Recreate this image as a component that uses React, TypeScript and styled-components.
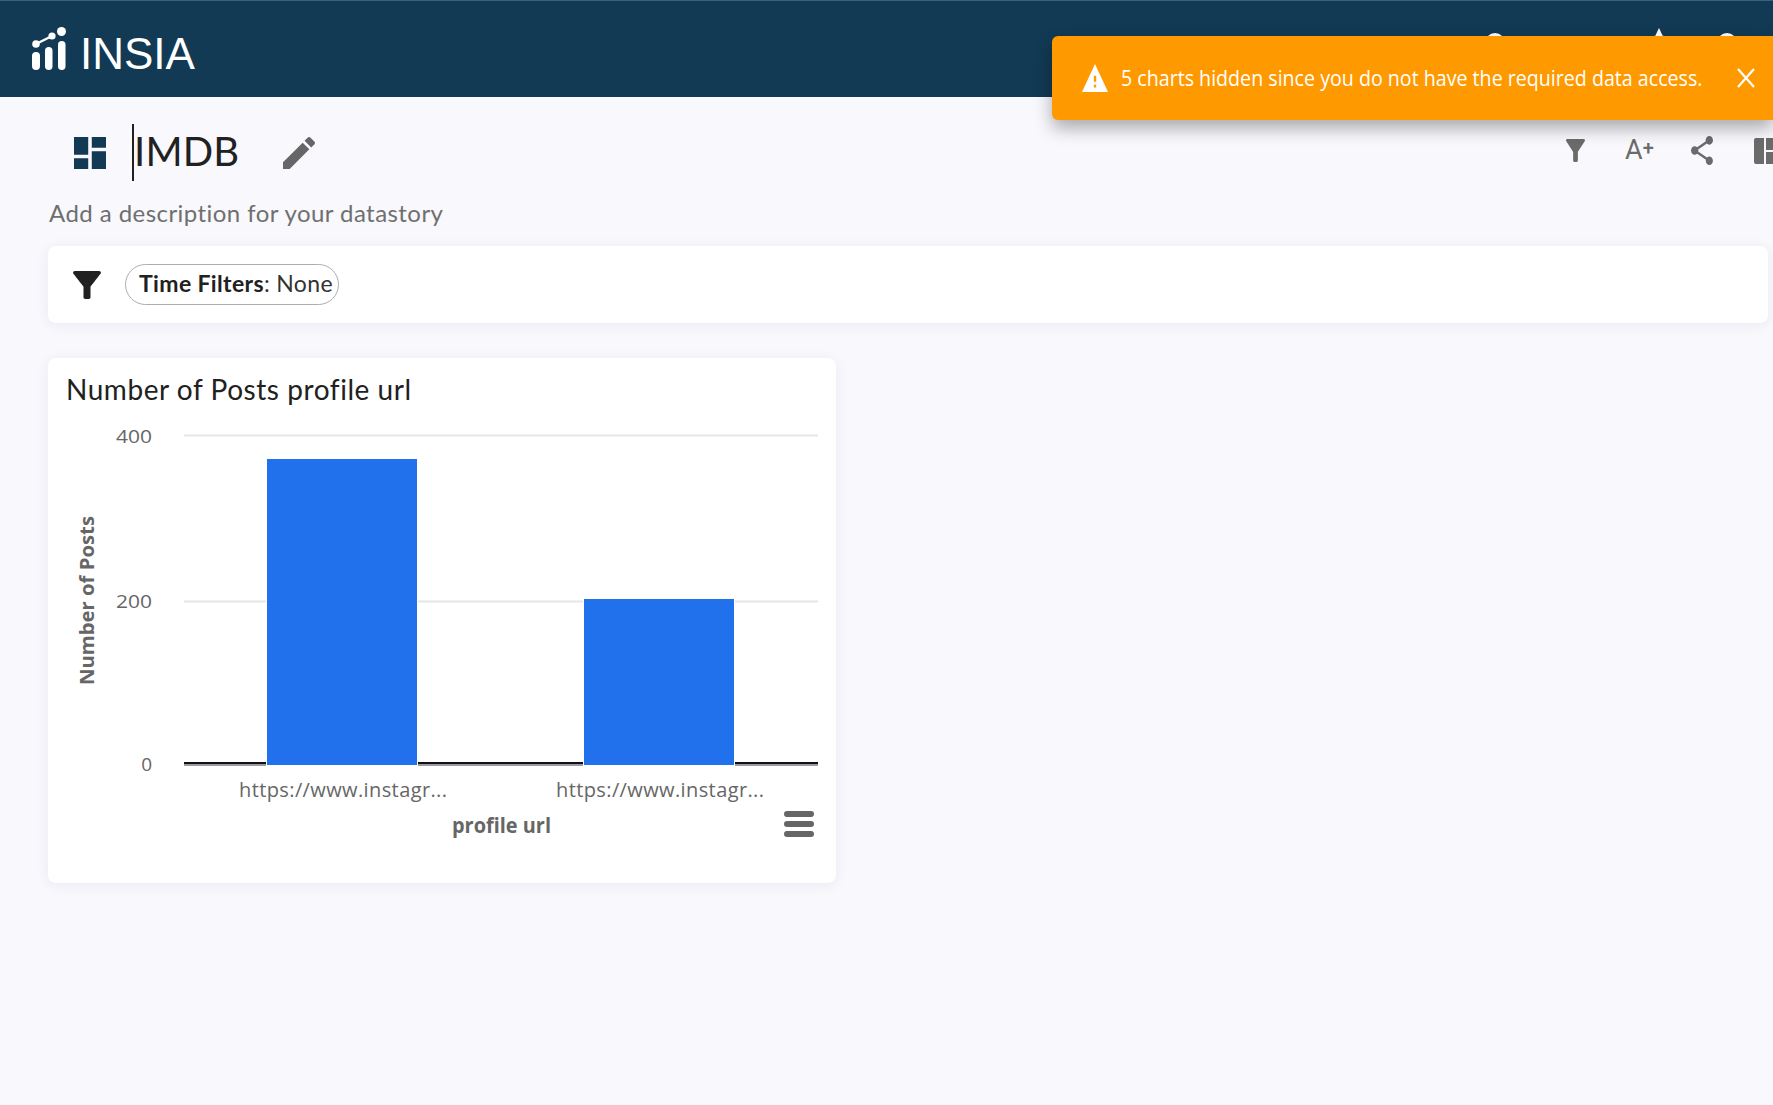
import { createGlobalStyle } from 'styled-components'
import styled from 'styled-components'

const GlobalStyle = createGlobalStyle`
  html, body {
    margin: 0;
    padding: 0;
    background: #f8f8fd;
  }

  #root {
    position: relative;
    width: 1773px;
    height: 1105px;
    overflow: hidden;
  }
`

const Page = styled.div`
  width: 1800px;
  font-family: Lato, "Open Sans", sans-serif;
`

const Header = styled.header`
  box-sizing: border-box;
  width: 1773px;
  height: 97px;
  padding: 0 32px;
  display: flex;
  align-items: center;
  justify-content: space-between;
  gap: 16px;
  border-top: 1px solid #3d5f7e;
  background: #123a54;
`

const Brand = styled.div`
  display: flex;
  align-items: center;
  gap: 14px;
`

const BrandName = styled.span`
  margin-top: 10px;
  color: #fff;
  font-family: "Liberation Sans", Arial, sans-serif;
  font-size: 44px;
  line-height: 1;
`

const HeaderIcons = styled.div`
  display: flex;
  align-items: flex-start;
  height: 60px;
  margin-top: -4px;
  margin-right: 4px;
`

const HeaderDot = styled.span<{ $gap: number }>`
  width: 20px;
  height: 20px;
  margin-left: ${(p) => p.$gap}px;
  margin-top: 16px;
  border-radius: 50%;
  background: #fff;
`

const HeaderStar = styled.svg`
  width: 26px;
  height: 26px;
  margin-left: 141px;
  margin-top: 10px;
`

const TitleRow = styled.div`
  width: 1780px;
  height: 57px;
  margin-top: 27px;
  display: flex;
  align-items: center;
  justify-content: space-between;
`

const TitleLeft = styled.div`
  display: flex;
  align-items: center;
  padding-left: 74px;
`

const DashIcon = styled.svg`
  width: 32px;
  height: 32px;
  margin-right: 26px;
  fill: #123a54;
`

const Title = styled.h1`
  box-sizing: border-box;
  height: 57px;
  margin: 0;
  padding-bottom: 3px;
  display: flex;
  align-items: center;
  border-left: 2px solid #212121;
  color: #212121;
  font-size: 40px;
  font-weight: 400;
  letter-spacing: 0.2px;
  line-height: 1;
`

const EditIcon = styled.svg`
  width: 32px;
  height: 32px;
  margin-left: 44px;
  fill: #666;
`

const Tools = styled.div`
  display: flex;
  align-items: center;
  gap: 40px;
  margin-bottom: 4px;
`

const ToolFunnel = styled.svg`
  width: 19px;
  height: 23px;
  fill: #6b6b6b;
`

const TextSize = styled.span`
  width: 27px;
  color: #6b6b6b;
  font-family: Roboto, sans-serif;
  font-size: 27px;
  line-height: 1;
  white-space: nowrap;
`

const PlusMark = styled.span`
  font-size: 20px;
  font-weight: 500;
  vertical-align: 4px;
`

const ShareIcon = styled.svg`
  width: 22px;
  height: 29px;
  margin-left: -1px;
  fill: #6b6b6b;
`

const LayoutIcon = styled.svg`
  width: 26px;
  height: 26px;
  margin-left: 1px;
  fill: #6b6b6b;
`

const Description = styled.p`
  margin: 16px 0 0 49px;
  color: #6f6f6f;
  font-size: 24px;
  letter-spacing: 0.44px;
  line-height: 32px;
`

const FilterBar = styled.section`
  box-sizing: border-box;
  width: 1720px;
  height: 77px;
  margin: 17px 0 0 48px;
  padding-left: 25px;
  display: flex;
  align-items: center;
  gap: 24px;
  border-radius: 8px;
  background: #fff;
  box-shadow: 0 2px 14px rgba(40, 40, 90, 0.07);
`

const FunnelIcon = styled.svg`
  width: 28px;
  height: 28px;
  fill: #212121;
`

const Chip = styled.div`
  box-sizing: border-box;
  width: 214px;
  height: 41px;
  padding: 0 0 3px 13px;
  display: flex;
  align-items: center;
  border: 1px solid #adadad;
  border-radius: 21px;
  color: #333;
  font-size: 23px;
  letter-spacing: 0.36px;
  white-space: pre;
`

const ChipLabel = styled.strong`
  color: #212121;
  font-weight: 700;
`

const ChartCard = styled.article`
  width: 788px;
  height: 525px;
  margin: 35px 0 0 48px;
  border-radius: 8px;
  background: #fff;
  box-shadow: 0 2px 14px rgba(40, 40, 90, 0.07);
`

const ChartTitle = styled.h2`
  box-sizing: border-box;
  height: 58px;
  margin: 0;
  padding: 13px 0 0 18px;
  color: #212121;
  font-size: 28px;
  font-weight: 400;
  letter-spacing: 0.55px;
  line-height: 36px;
`

const ChartArea = styled.svg`
  display: block;
  width: 788px;
  height: 467px;
`

const Toast = styled.div`
  position: absolute;
  top: 36px;
  right: 0;
  box-sizing: border-box;
  width: 721px;
  height: 84px;
  padding-left: 30px;
  display: flex;
  align-items: center;
  border-radius: 6px 0 0 6px;
  background: #ff9900;
  box-shadow: 0 8px 18px rgba(0, 0, 0, 0.32);
`

const WarnIcon = styled.svg`
  width: 26px;
  height: 28px;
  fill: #fff;
  flex: none;
`

const ToastText = styled.span`
  width: 581px;
  margin: 0 0 2px 13px;
  color: #fff;
  font-family: "Open Sans", sans-serif;
  font-size: 22px;
  line-height: 1;
  white-space: nowrap;
  transform: scaleX(0.892);
  transform-origin: left center;
`

const ToastClose = styled.svg`
  width: 18px;
  height: 20px;
  margin-left: 35px;
  stroke: #fff;
  stroke-width: 2.2;
  flex: none;
`

const axisFont = '"Open Sans", sans-serif'

const bars = [
  { x: 219, top: 43 },
  { x: 536, top: 183 },
]

const Chart = () => (
  <ChartArea viewBox="0 0 788 467">
    {[19.5, 185.5].map((y) => (
      <line key={y} x1={136} x2={770} y1={y} y2={y} stroke="#e6e6e6" strokeWidth={2} />
    ))}
    <line x1={136} x2={770} y1={347} y2={347} stroke="#111" strokeWidth={2} />
    <line x1={136} x2={770} y1={349} y2={349} stroke="#9a9aa6" strokeWidth={2} />
    {bars.map((b) => (
      <rect
        key={b.x}
        x={b.x}
        y={b.top}
        width={150}
        height={349 - b.top}
        fill="#2271ec"
        stroke="#fff"
        strokeWidth={2}
        paintOrder="stroke"
      />
    ))}
    {[
      { y: 27, label: '400', w: 36 },
      { y: 192, label: '200', w: 36 },
    ].map((t) => (
      <text key={t.label} x={104} y={t.y} textAnchor="end" fontFamily={axisFont} fontSize={19} fill="#666" textLength={t.w} lengthAdjust="spacingAndGlyphs">
        {t.label}
      </text>
    ))}
    <text x={104} y={355} textAnchor="end" fontFamily={axisFont} fontSize={19} fill="#666">0</text>
    {[191, 508].map((x) => (
      <text key={x} x={x} y={381} fontFamily={axisFont} fontSize={20} fill="#666" textLength={208} lengthAdjust="spacing">
        https://www.instagr...
      </text>
    ))}
    <text x={404} y={417} fontFamily={axisFont} fontSize={22} fontWeight={700} fill="#666" textLength={99} lengthAdjust="spacingAndGlyphs">
      profile url
    </text>
    <text
      transform="translate(46 269) rotate(-90)"
      fontFamily={axisFont}
      fontSize={20}
      fontWeight={700}
      fill="#666"
      textLength={169}
      lengthAdjust="spacingAndGlyphs"
    >
      Number of Posts
    </text>
    {[395, 405, 415].map((y) => (
      <rect key={y} x={736} y={y} width={30} height={6} rx={3} fill="#666" />
    ))}
  </ChartArea>
)

const App = () => (
  <>
    <GlobalStyle />
    <Page>
      <Header>
        <Brand>
          <svg width="34" height="44" viewBox="0 0 34 44" aria-label="INSIA logo">
            <g fill="#fff">
              <rect x="0" y="25" width="8" height="18" rx="4" />
              <rect x="13" y="20" width="7.5" height="23" rx="3.75" />
              <rect x="26" y="14" width="7.5" height="29" rx="3.75" />
              <circle cx="29.5" cy="4.5" r="4.5" />
              <circle cx="4" cy="17" r="3.8" />
              <circle cx="20" cy="9" r="3.6" />
            </g>
            <line x1="4" y1="17" x2="20" y2="9" stroke="#fff" strokeWidth="2.4" />
          </svg>
          <BrandName>INSIA</BrandName>
        </Brand>
        <HeaderIcons>
          <HeaderDot $gap={0} />
          <HeaderStar viewBox="0 0 24 24" fill="#fff">
            <path d="M12 1l3.4 7 7.6 1-5.5 5.3 1.3 7.7L12 18l-6.8 4 1.3-7.7L1 9l7.6-1z" />
          </HeaderStar>
          <HeaderDot $gap={45} />
        </HeaderIcons>
      </Header>

      <TitleRow>
        <TitleLeft>
          <DashIcon viewBox="3 3 18 18">
            <path d="M3 13h8V3H3v10zm0 8h8v-6H3v6zm10 0h8V11h-8v10zm0-18v6h8V3h-8z" />
          </DashIcon>
          <Title>IMDB</Title>
          <EditIcon viewBox="3 3 18 18">
            <path d="M3 17.25V21h3.75L17.81 9.94l-3.75-3.75L3 17.25zM20.71 7.04c.39-.39.39-1.02 0-1.41l-2.34-2.34c-.39-.39-1.02-.39-1.41 0l-1.83 1.83 3.75 3.75 1.83-1.83z" />
          </EditIcon>
        </TitleLeft>
        <Tools>
          <ToolFunnel viewBox="4 4 16 16" preserveAspectRatio="none">
            <path d="M4.25 5.61C6.27 8.2 10 13 10 13v6c0 .55.45 1 1 1h2c.55 0 1-.45 1-1v-6s3.72-4.8 5.74-7.39c.51-.66.04-1.61-.79-1.61H5.04c-.83 0-1.3.95-.79 1.61z" />
          </ToolFunnel>
          <TextSize>A<PlusMark>+</PlusMark></TextSize>
          <ShareIcon viewBox="3 2 18 20" preserveAspectRatio="none">
            <path d="M18 16.08c-.76 0-1.44.3-1.96.77L8.91 12.7c.05-.23.09-.46.09-.7s-.04-.47-.09-.7l7.05-4.11c.54.5 1.25.81 2.04.81 1.66 0 3-1.34 3-3s-1.34-3-3-3-3 1.34-3 3c0 .24.04.47.09.7L8.04 9.81C7.5 9.31 6.79 9 6 9c-1.66 0-3 1.34-3 3s1.34 3 3 3c.79 0 1.5-.31 2.04-.81l7.12 4.16c-.05.21-.08.43-.08.65 0 1.61 1.31 2.92 2.92 2.92 1.61 0 2.92-1.31 2.92-2.92s-1.31-2.92-2.92-2.92z" />
          </ShareIcon>
          <LayoutIcon viewBox="0 0 26 26">
            <path d="M2 0h8v26H2a2 2 0 0 1-2-2V2a2 2 0 0 1 2-2zM12 0h12a2 2 0 0 1 2 2v10H12zM12 14h14v10a2 2 0 0 1-2 2H12z" />
          </LayoutIcon>
        </Tools>
      </TitleRow>

      <Description>Add a description for your datastory</Description>

      <FilterBar>
        <FunnelIcon viewBox="4 4 16 16">
          <path d="M4.25 5.61C6.27 8.2 10 13 10 13v6c0 .55.45 1 1 1h2c.55 0 1-.45 1-1v-6s3.72-4.8 5.74-7.39c.51-.66.04-1.61-.79-1.61H5.04c-.83 0-1.3.95-.79 1.61z" />
        </FunnelIcon>
        <Chip>
          <span><ChipLabel>Time Filters</ChipLabel>: None</span>
        </Chip>
      </FilterBar>

      <ChartCard>
        <ChartTitle>Number of Posts profile url</ChartTitle>
        <Chart />
      </ChartCard>
    </Page>

    <Toast>
      <WarnIcon viewBox="1 2 22 19" preserveAspectRatio="none">
        <path d="M1 21h22L12 2 1 21zm12-3h-2v-2h2v2zm0-4h-2v-4h2v4z" />
      </WarnIcon>
      <ToastText>5 charts hidden since you do not have the required data access.</ToastText>
      <ToastClose viewBox="0 0 18 20">
        <path d="M1 1l16 18M17 1L1 19" fill="none" />
      </ToastClose>
    </Toast>
  </>
)

export default App
